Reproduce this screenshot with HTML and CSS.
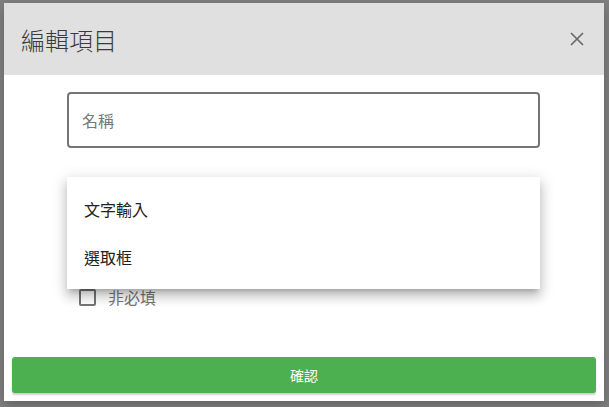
FILE: index.html
```html
<!DOCTYPE html>
<html lang="zh-Hant">
<head>
  <meta charset="UTF-8" />
  <title>編輯項目</title>
  <link rel="stylesheet" href="styles.css">
</head>
<body>

<!-- DIALOG -->
<div class="dialog">
  <div class="dialog-header">
    <h2 class="dialog-title">編輯項目</h2>
    <button class="close-btn" aria-label="close">
      <svg width="14" height="14" viewBox="0 0 14 14">
        <path d="M1 1 L13 13 M13 1 L1 13" stroke="#666" stroke-width="1.6" fill="none" />
      </svg>
    </button>
  </div>

  <div class="dialog-body">
    <div class="text-field">
      <input type="text" placeholder="名稱" />
    </div>

    <div class="select-field">
      <ul class="menu">
        <li class="menu-item">文字輸入</li>
        <li class="menu-item">選取框</li>
      </ul>
    </div>

    <label class="check-row">
      <span class="checkbox"></span>
      <span class="check-label">非必填</span>
    </label>
  </div>

  <div class="dialog-footer">
    <button class="confirm-btn">確認</button>
  </div>
</div>

</body>
</html>
```

FILE: styles.css
```css
body, html {
  margin: 0;
  padding: 0;
  height: 100%;
  width: 100%;
  overflow: hidden;
  font-family: "Noto Sans CJK TC", "Noto Sans", sans-serif;
}

body {
  background: #808080;
  padding: 3px 0 0 4px;
  box-sizing: border-box;
}

.dialog {
  width: 600px;
  height: 398px;
  background: #fff;
  display: flex;
  flex-direction: column;
  box-shadow: 0 4px 12px rgba(0,0,0,0.25);
}

.dialog-header {
  height: 72px;
  background: #e0e0e0;
  display: flex;
  align-items: center;
  justify-content: space-between;
  padding: 0 20px 0 17px;
  flex-shrink: 0;
}

.dialog-title {
  margin: 0;
  font-size: 24px;
  font-weight: 300;
  color: #3a3a3a;
}

.close-btn {
  background: none;
  border: none;
  padding: 0;
  width: 14px;
  height: 14px;
  cursor: pointer;
  display: flex;
}

.dialog-body {
  width: 473px;
  margin-left: 63px;
  padding-top: 17px;
  flex: 1;
}

.text-field input {
  display: block;
  width: 100%;
  height: 56px;
  box-sizing: border-box;
  border: 2px solid #757575;
  border-radius: 4px;
  padding: 0 13px;
  font-family: inherit;
  font-size: 16px;
  color: #333;
  outline: none;
}

.text-field input::placeholder {
  color: #777;
}

.select-field {
  position: relative;
  height: 56px;
  margin-top: 16px;
}

.menu {
  position: absolute;
  top: 13px;
  left: 0;
  right: 0;
  margin: 0;
  padding: 8px 0;
  list-style: none;
  background: #fff;
  z-index: 2;
  box-shadow: 0 5px 5px -3px rgba(0,0,0,0.2),
              0 8px 10px 1px rgba(0,0,0,0.14),
              0 3px 14px 2px rgba(0,0,0,0.12);
}

.menu-item {
  height: 48px;
  line-height: 48px;
  padding: 0 17px;
  font-size: 16px;
  color: #222;
}

.check-row {
  display: flex;
  align-items: center;
  height: 24px;
  margin-top: 65px;
  padding-left: 12px;
}

.checkbox {
  width: 17px;
  height: 17px;
  box-sizing: border-box;
  border: 2px solid #757575;
  border-radius: 2px;
}

.check-label {
  margin-left: 12px;
  font-size: 16px;
  color: #777;
}

.dialog-footer {
  padding: 0 8px 8px;
}

.confirm-btn {
  display: block;
  width: 100%;
  height: 36px;
  border: none;
  border-radius: 3px;
  background: #4caf50;
  color: #fff;
  font-family: inherit;
  font-size: 14px;
  cursor: pointer;
  box-shadow: 0 2px 2px rgba(0,0,0,0.2);
}
```
